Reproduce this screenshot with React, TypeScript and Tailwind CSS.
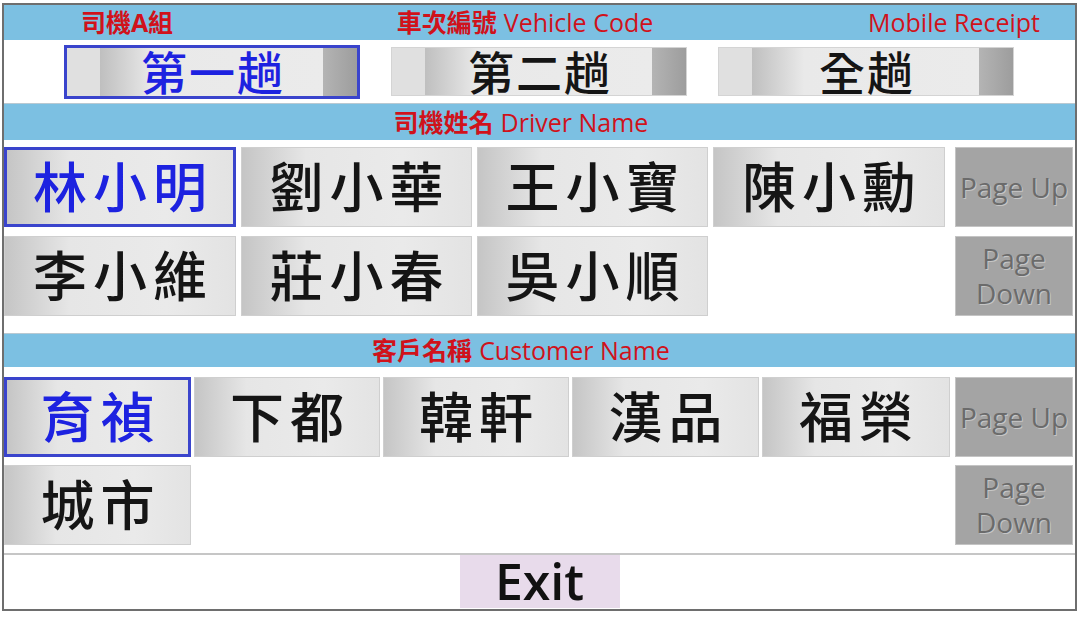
import React from 'react';

const NAME_BG = 'bg-[linear-gradient(to_right,#c5c5c5,#e6e6e6_28%,#eaeaea_70%,#e3e3e3)]';
const TRIP_BG =
  'bg-[linear-gradient(to_right,#e0e0e0_0,#e0e0e0_33px,#bfbfbf_33px,#e9e9e9_85px,#ebebeb_calc(100%_-_34px),#b4b4b4_calc(100%_-_34px),#9d9d9d)]';

interface BtnProps {
  label: string;
  active?: boolean;
}

function NameButton({ label, active = false }: BtnProps) {
  return (
    <button
      type="button"
      className={`h-full w-full flex items-center justify-center pl-[6px] text-[54px] font-medium leading-none tracking-[6px] ${NAME_BG} ${
        active ? 'border-[3px] border-[#3a44cc] text-[#1d22e0]' : 'border border-[#cfcfcf] text-[#151515]'
      }`}
    >
      {label}
    </button>
  );
}

function TripButton({ label, active = false }: BtnProps) {
  return (
    <button
      type="button"
      className={`w-[296px] flex items-center justify-center pl-[2px] text-[46px] font-medium leading-none tracking-[2px] ${TRIP_BG} ${
        active ? 'h-[54px] border-[3px] border-[#3a44cc] text-[#1d22e0]' : 'h-[49px] border border-[#d4d4d4] text-[#151515]'
      }`}
    >
      {label}
    </button>
  );
}

function PageButton({ up }: { up?: boolean }) {
  return (
    <button
      type="button"
      className="w-[118px] h-full bg-[#a4a4a4] border border-[#c4c4c4] flex flex-col items-center justify-center text-[28px] leading-[35px] text-[#6b6b6b] [text-shadow:1px_1px_0_#c6c6c6]"
    >
      {up ? (
        <span className="whitespace-nowrap">Page Up</span>
      ) : (
        <>
          <span>Page</span>
          <span>Down</span>
        </>
      )}
    </button>
  );
}

function SectionBar({ cjk, latin, tall }: { cjk: string; latin: string; tall?: boolean }) {
  return (
    <div
      className={`bg-[#7cc0e2] flex items-center justify-center pr-[37px] text-[25px] leading-none text-[#d0121b] border-t border-[#b9c9d2] ${
        tall ? 'h-[37px]' : 'h-[34px]'
      }`}
    >
      <span className="font-bold">{cjk}</span>
      <span className="ml-[7px] font-medium">{latin}</span>
    </div>
  );
}

export default function App() {
  const drivers = ['林小明', '劉小華', '王小寶', '陳小勳'];
  const drivers2 = ['李小維', '莊小春', '吳小順'];
  const customers = ['育禎', '下都', '韓軒', '漢品', '福榮'];

  return (
    <div className="w-[1080px] h-[617px] bg-white pl-[2px] pt-[3px] font-['Open_Sans','Noto_Sans_CJK_TC',sans-serif]">
      <div className="w-[1075px] h-[608px] border-2 border-[#6e6e6e] flex flex-col">
        {/* Title bar */}
        <div className="h-[35px] bg-[#7cc0e2] flex items-center text-[25px] leading-none text-[#d0121b]">
          <div className="w-[246px] text-center font-bold">司機A組</div>
          <div className="w-[550px] flex justify-center">
            <span className="font-bold">車次編號</span>
            <span className="ml-[7px] font-medium">Vehicle Code</span>
          </div>
          <div className="flex-1 text-right pr-[35px] font-medium">Mobile Receipt</div>
        </div>

        {/* Trips */}
        <div className="h-[63px] flex items-center pl-[60px] gap-[31px]">
          <TripButton label="第一趟" active />
          <TripButton label="第二趟" />
          <TripButton label="全趟" />
        </div>

        <SectionBar cjk="司機姓名" latin="Driver Name" tall />

        {/* Drivers */}
        <div className="h-[193px] pt-[7px]">
          <div className="grid grid-cols-[232px_231px_231px_232px_123px] grid-rows-[80px_80px] gap-x-[5px] gap-y-[9px]">
            {drivers.map((d, i) => (
              <NameButton key={d} label={d} active={i === 0} />
            ))}
            <div className="justify-self-end h-full">
              <PageButton up />
            </div>
            {drivers2.map((d) => (
              <NameButton key={d} label={d} />
            ))}
            <div />
            <div className="justify-self-end h-full">
              <PageButton />
            </div>
          </div>
        </div>

        <SectionBar cjk="客戶名稱" latin="Customer Name" />

        {/* Customers */}
        <div className="h-[186px] pt-[10px]">
          <div className="grid grid-cols-[187px_186px_186px_187px_188px_1fr] grid-rows-[80px_80px] gap-x-[3px] gap-y-[8px]">
            {customers.map((c, i) => (
              <NameButton key={c} label={c} active={i === 0} />
            ))}
            <div className="justify-self-center h-full">
              <PageButton up />
            </div>
            <NameButton label="城市" />
            <div className="col-span-4" />
            <div className="justify-self-center h-full">
              <PageButton />
            </div>
          </div>
        </div>

        {/* Footer */}
        <div className="h-[2px] bg-[#c6c6c6]" />
        <div className="flex-1 flex justify-center">
          <button
            type="button"
            className="w-[160px] h-[53px] bg-[#e8dbeb] flex items-center justify-center text-[50px] font-semibold leading-[53px] text-[#111]"
          >
            Exit
          </button>
        </div>
      </div>
    </div>
  );
}
